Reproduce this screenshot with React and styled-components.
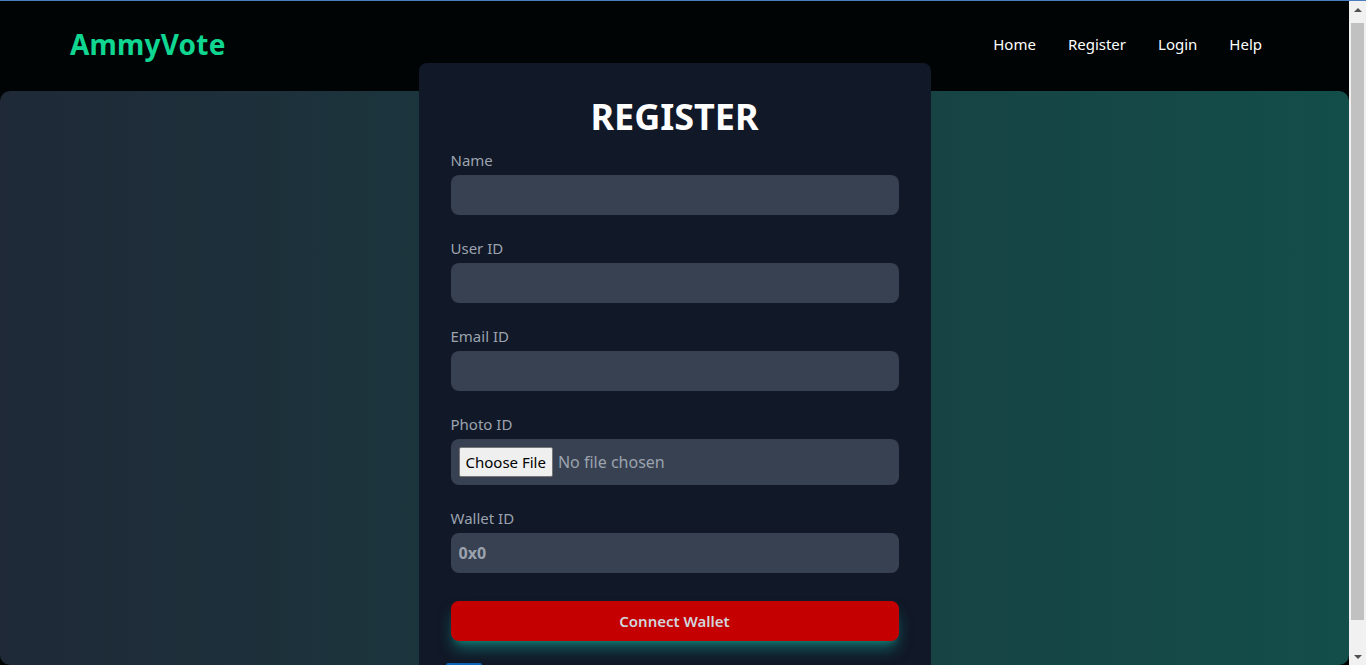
import styled, { createGlobalStyle } from "styled-components";

const GlobalStyle = createGlobalStyle`
    html, body {
        margin: 0;
        padding: 0;
        background: #010405;
        font-family: "Noto Sans", "Open Sans", sans-serif;
    }
    * {
        box-sizing: border-box;
    }
`;

const Shell = styled.div`
    display: flex;
    border-top: 1px solid #4a7cc0;
`;

const Content = styled.div`
    flex: 1;
    min-width: 0;
`;

const Scrollbar = styled.div`
    width: 17px;
    height: calc(100vh - 1px);
    flex-shrink: 0;
    align-self: flex-start;
    background: #f1f1f1;
    display: flex;
    flex-direction: column;
`;

const Arrow = styled.div`
    height: 17px;
    display: flex;
    align-items: center;
    justify-content: center;
    flex-shrink: 0;
    &::before {
        content: "";
        border-left: 4px solid transparent;
        border-right: 4px solid transparent;
        ${(p) => (p.$down ? "border-top: 4px solid #505050;" : "border-bottom: 4px solid #505050;")}
    }
`;

const Thumb = styled.div`
    margin: 5px 2px 0;
    height: 597px;
    background: #c1c1c1;
`;

const Track = styled.div`
    flex: 1;
`;

const Header = styled.header`
    height: 90px;
    display: flex;
    align-items: center;
    justify-content: space-between;
    padding: 0 87px 4px 70px;
    background: #010405;
`;

const Logo = styled.div`
    font-size: 28px;
    font-weight: 700;
    color: #0fd690;
    letter-spacing: 0.2px;
`;

const Nav = styled.nav`
    display: flex;
    align-items: center;
    gap: 32px;
`;

const NavLink = styled.a`
    color: #ffffff;
    font-size: 15px;
    text-decoration: none;
    cursor: pointer;
`;

const Panel = styled.main`
    height: 574px;
    border-radius: 10px;
    background: linear-gradient(to right, #1f2937, #134e4a);
    display: flex;
    justify-content: center;
    align-items: flex-start;
`;

const Card = styled.form`
    width: 512px;
    margin-top: -28px;
    padding: 34px 32px 20px;
    background: #111827;
    border-radius: 8px;
`;

const Title = styled.h1`
    margin: 0 0 12px;
    text-align: center;
    color: #ffffff;
    font-size: 36px;
    line-height: 40px;
    font-weight: 700;
`;

const Field = styled.div`
    margin-bottom: 22px;
`;

const Label = styled.label`
    display: block;
    color: #9ca3af;
    font-size: 15px;
    line-height: 22px;
    margin-bottom: 4px;
`;

const Input = styled.input`
    display: block;
    width: 100%;
    height: ${(p) => (p.type === "file" ? "46px" : "40px")};
    padding: ${(p) => (p.type === "file" ? "8px" : "0 8px")};
    border: none;
    outline: none;
    border-radius: 8px;
    background: #374151;
    color: #9ca3af;
    font-family: inherit;
    font-size: 16px;
    font-weight: ${(p) => (p.$bold ? 700 : 400)};

    &::file-selector-button {
        font-family: inherit;
        font-size: 15px;
        color: #000000;
        background: #efefef;
        border: 1px solid #767676;
        border-radius: 2px;
        padding: 4px 6px;
        margin-right: 5px;
    }
`;

const SubmitButton = styled.button`
    display: block;
    width: 100%;
    height: 40px;
    margin-top: 28px;
    border: none;
    border-radius: 8px;
    background: #c50000;
    color: #d1d5db;
    font-family: inherit;
    font-size: 15px;
    font-weight: 600;
    box-shadow: 0 10px 15px -3px rgba(20, 184, 166, 0.5),
        0 4px 6px -4px rgba(20, 184, 166, 0.5);
    cursor: pointer;
`;

const Footnote = styled.div`
    margin: 22px 0 0 -5px;
    width: 36px;
    height: 26px;
    background: #0b63b6;
    border-radius: 2px;
`;

const fields = [
    { label: "Name", type: "text" },
    { label: "User ID", type: "text" },
    { label: "Email ID", type: "email" },
    { label: "Photo ID", type: "file" },
];

const App = () => {
    return (
        <>
            <GlobalStyle />
            <Shell>
                <Content>
                    <Header>
                        <Logo>AmmyVote</Logo>
                        <Nav>
                            <NavLink>Home</NavLink>
                            <NavLink>Register</NavLink>
                            <NavLink>Login</NavLink>
                            <NavLink>Help</NavLink>
                        </Nav>
                    </Header>
                    <Panel>
                        <Card onSubmit={(e) => e.preventDefault()}>
                            <Title>REGISTER</Title>
                            {fields.map((f) => (
                                <Field key={f.label}>
                                    <Label>{f.label}</Label>
                                    <Input type={f.type} />
                                </Field>
                            ))}
                            <Field>
                                <Label>Wallet ID</Label>
                                <Input type="text" value="0x0" readOnly $bold />
                            </Field>
                            <SubmitButton type="submit">Connect Wallet</SubmitButton>
                            <Footnote />
                        </Card>
                    </Panel>
                </Content>
                <Scrollbar>
                    <Arrow />
                    <Thumb />
                    <Track />
                    <Arrow $down />
                </Scrollbar>
            </Shell>
        </>
    );
};

export default App;
